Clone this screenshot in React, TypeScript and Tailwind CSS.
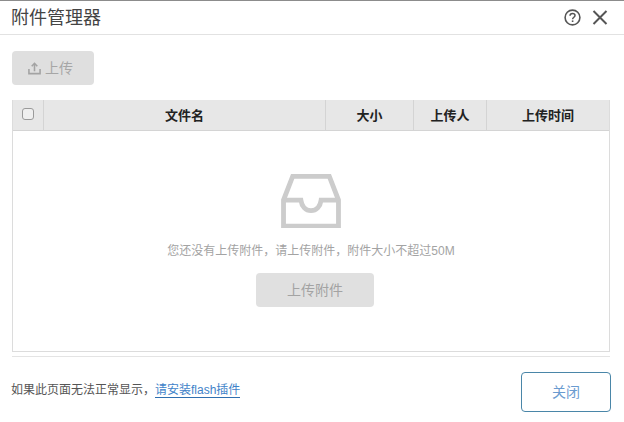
const FONT = "font-['Liberation_Sans','Noto_Sans_CJK_SC',sans-serif]";

function UploadIcon() {
  return (
    <svg width="13" height="13" viewBox="0 0 14 14" fill="none" stroke="#a3a3a3" strokeWidth="1.7">
      <path d="M1 7.5V12.5H13V7.5" />
      <path d="M7 10V2" />
      <path d="M4 4.6L7 1.6L10 4.6" />
    </svg>
  );
}

function InboxIcon() {
  return (
    <svg width="60" height="54" viewBox="0 0 62 56" fill="none" stroke="#cccccc" strokeWidth="5">
      <path d="M2.5 54V27L12 2.5H50L59.5 27V54Z" strokeLinejoin="miter" />
      <path d="M2.5 27H20.5C21.5 34 25.5 38 31 38C36.5 38 40.5 34 41.5 27H59.5" />
    </svg>
  );
}

const columns = [
  { label: "文件名", width: "w-[282px]" },
  { label: "大小", width: "w-[88px]" },
  { label: "上传人", width: "w-[73px]" },
  { label: "上传时间", width: "flex-1" },
];

export default function App() {
  return (
    <div className={`${FONT} w-[624px] h-[422px] bg-white border-t border-[#8c8c8c] overflow-hidden flex flex-col`}>
      {/* title bar */}
      <div className="h-[33px] flex items-center justify-between pl-[11px] pr-[16px] border-b border-[#e2e2e2] shrink-0 box-content">
        <h1 className="text-[18px] leading-[30px] text-[#444444]">附件管理器</h1>
        <div className="flex items-center gap-[11px]">
          <svg width="17" height="17" viewBox="0 0 17 17" fill="none" stroke="#555555">
            <circle cx="8.5" cy="8.5" r="7.4" strokeWidth="1.6" />
            <path d="M6 6.8C6 5.3 7.1 4.4 8.5 4.4C10 4.4 11 5.3 11 6.5C11 8.2 8.6 8.3 8.6 10.3" strokeWidth="1.5" />
            <path d="M8.6 11.4V13" strokeWidth="1.6" />
          </svg>
          <svg width="16" height="15" viewBox="0 0 16 15" fill="none" stroke="#555555" strokeWidth="2">
            <path d="M1.5 1L14.5 14M14.5 1L1.5 14" />
          </svg>
        </div>
      </div>

      <div className="flex-1 flex flex-col px-3">
        {/* toolbar */}
        <div className="pt-4 pb-[15px]">
          <button className="w-[82px] h-[34px] rounded-[4px] bg-[#dfdfdf] flex items-center pl-[16px] gap-[4px] text-[14px] text-[#a6a6a6]">
            <UploadIcon />
            上传
          </button>
        </div>

        {/* file table */}
        <div className="w-[598px] h-[252px] border border-[#dcdcdc] flex flex-col">
          <div className="h-[30px] bg-[#e7e7e7] border-b border-[#d4d4d4] flex box-content shrink-0 -mt-px">
            <div className="w-[31px] flex items-center justify-center border-r border-[#d4d4d4]">
              <span className="w-[12px] h-[12px] -mt-[2px] rounded-[3px] border border-[#9a9a9a] bg-[#efefef]" />
            </div>
            {columns.map((col, i) => (
              <div
                key={col.label}
                className={`${col.width} flex items-center justify-center pt-px text-[13px] font-bold text-[#222222] ${i < columns.length - 1 ? "border-r border-[#d4d4d4]" : ""}`}
              >
                {col.label}
              </div>
            ))}
          </div>

          <div className="flex-1 flex flex-col items-center pt-[43px]">
            <InboxIcon />
            <p className="mt-[15px] text-[12px] leading-[16px] text-[#a3a3a3]">
              您还没有上传附件，请上传附件，附件大小不超过50M
            </p>
            <button className="mt-[14px] ml-2 w-[118px] h-[34px] rounded-[4px] bg-[#e0e0e0] text-[14px] text-[#a3a3a3]">
              上传附件
            </button>
          </div>
        </div>

        <div className="mt-1 w-[598px] border-t border-[#e4e4e4]" />

        {/* footer */}
        <div className="flex items-center justify-between mt-[15px] -ml-px w-[600px]">
          <p className="mb-[4px] text-[12px] text-[#555555]">
            如果此页面无法正常显示，
            <a className="text-[#3f83c9] border-b border-[#2f6fb0]">请安装flash插件</a>
          </p>
          <button className="w-[90px] h-[40px] rounded-[4px] border border-[#4a86a8] bg-white text-[14px] text-[#6a9bd0]">
            关闭
          </button>
        </div>
      </div>
    </div>
  );
}
